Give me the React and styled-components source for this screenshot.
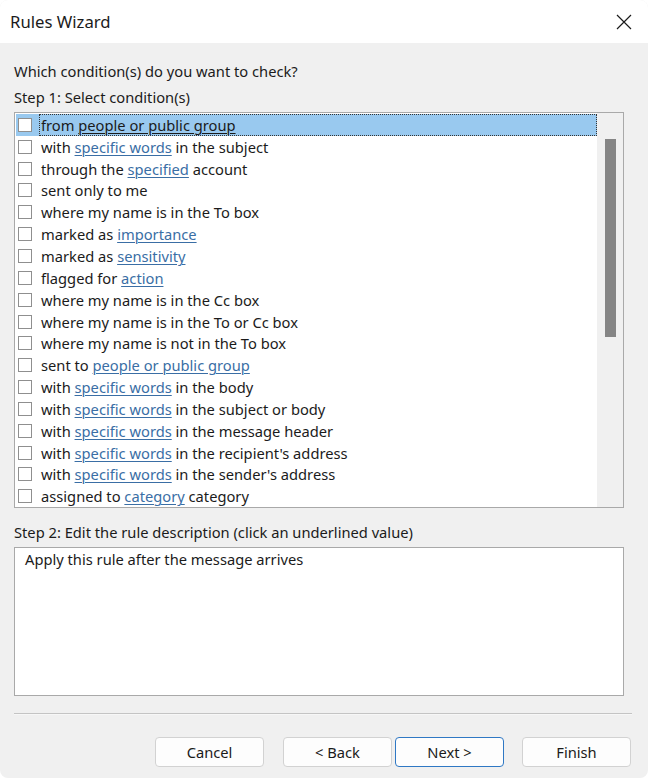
import React from "react";
import styled, { createGlobalStyle } from "styled-components";

const Global = createGlobalStyle`
  html, body { margin: 0; padding: 0; background: #ffffff; }
  body { font-family: "Noto Sans", "Open Sans", sans-serif; color: #1b1b1b; }
  * { box-sizing: border-box; }
`;

const Window = styled.div`
  width: 648px;
  height: 778px;
  border-radius: 8px;
  overflow: hidden;
  display: flex;
  flex-direction: column;
  background: #f0f0f0;
`;

const TitleBar = styled.div`
  height: 43px;
  flex: none;
  background: #ffffff;
  display: flex;
  align-items: center;
  justify-content: space-between;
  padding: 0 15px 0 10px;
`;

const Title = styled.div`
  font-size: 16.7px;
  color: #1b1b1b;
  padding-bottom: 1px;
`;

const CloseButton = styled.div`
  width: 18px;
  height: 18px;
  display: flex;
  align-items: center;
  justify-content: center;
`;

const Body = styled.div`
  flex: 1;
  display: flex;
  flex-direction: column;
  padding: 18px 16px 0 14px;
`;

const Label = styled.div`
  font-size: 14.7px;
  line-height: 20px;
  height: 20px;
  margin-top: ${(p) => p.$mt || 0}px;
  white-space: nowrap;
`;

const ListBox = styled.div`
  margin-top: 5px;
  margin-right: 8px;
  height: 396px;
  border: 1px solid #a9a9a9;
  background: #ffffff;
  display: flex;
`;

const Rows = styled.div`
  flex: 1;
  padding: 1px 0 0 1px;
  display: flex;
  flex-direction: column;
`;

const Row = styled.div`
  height: 21.85px;
  display: flex;
  align-items: center;
  background: ${(p) => (p.$selected ? "#99c9ef" : "transparent")};
  font-size: 14.7px;
  white-space: nowrap;
`;

const Check = styled.span`
  width: 14px;
  height: 14px;
  flex: none;
  margin-left: 2px;
  margin-right: 7px;
  border: 1px solid #8f8f8f;
  background: #ffffff;
`;

const RowText = styled.span`
  flex: 1;
  align-self: stretch;
  display: flex;
  align-items: center;
  padding-left: 1px;
  border: 1px dotted ${(p) => (p.$focus ? "#333" : "transparent")};
`;

const Link = styled.span`
  color: ${(p) => (p.$selected ? "#1b1b1b" : "#3a6ea5")};
  text-decoration: underline;
  text-underline-offset: 2px;
  text-decoration-thickness: 1px;
  white-space: pre;
`;

const Plain = styled.span`
  white-space: pre;
`;

const ScrollTrack = styled.div`
  width: 26px;
  flex: none;
  background: #f0f0f0;
  display: flex;
  justify-content: center;
  padding-top: 26px;
`;

const Thumb = styled.div`
  width: 11px;
  height: 198px;
  background: #858585;
`;

const DescBox = styled.div`
  margin-top: 5px;
  margin-right: 8px;
  height: 149px;
  border: 1px solid #a9a9a9;
  background: #ffffff;
  padding: 1px 10px;
  font-size: 14.7px;
  line-height: 20px;
`;

const Separator = styled.div`
  margin-top: 17px;
  height: 2px;
  border-top: 1px solid #c4c4c4;
  border-bottom: 1px solid #f7f7f7;
`;

const ButtonRow = styled.div`
  margin-top: 22px;
  display: flex;
  justify-content: flex-end;
  padding-right: 1px;
`;

const Button = styled.button`
  width: 109px;
  height: 30px;
  margin-left: ${(p) => p.$ml || 0}px;
  border-radius: 4px;
  border: 1px solid ${(p) => (p.$primary ? "#2f78c4" : "#d2d2d2")};
  background: #fdfdfd;
  font-family: "Noto Sans", "Open Sans", sans-serif;
  font-size: 14.7px;
  color: #1b1b1b;
  padding: 0 0 1px 0;
`;

const rows = [
  ["from ", { l: "people or public group" }],
  ["with ", { l: "specific words" }, " in the subject"],
  ["through the ", { l: "specified" }, " account"],
  ["sent only to me"],
  ["where my name is in the To box"],
  ["marked as ", { l: "importance" }],
  ["marked as ", { l: "sensitivity" }],
  ["flagged for ", { l: "action" }],
  ["where my name is in the Cc box"],
  ["where my name is in the To or Cc box"],
  ["where my name is not in the To box"],
  ["sent to ", { l: "people or public group" }],
  ["with ", { l: "specific words" }, " in the body"],
  ["with ", { l: "specific words" }, " in the subject or body"],
  ["with ", { l: "specific words" }, " in the message header"],
  ["with ", { l: "specific words" }, " in the recipient's address"],
  ["with ", { l: "specific words" }, " in the sender's address"],
  ["assigned to ", { l: "category" }, " category"],
];

export default function App() {
  return (
    <>
      <Global />
      <Window>
        <TitleBar>
          <Title>Rules Wizard</Title>
          <CloseButton>
            <svg width="16" height="16" viewBox="0 0 16 16">
              <path d="M1 1 L15 15 M15 1 L1 15" stroke="#1b1b1b" strokeWidth="1.2" fill="none" />
            </svg>
          </CloseButton>
        </TitleBar>
        <Body>
          <Label>Which condition(s) do you want to check?</Label>
          <Label $mt={6}>Step 1: Select condition(s)</Label>
          <ListBox>
            <Rows>
              {rows.map((parts, i) => (
                <Row key={i} $selected={i === 0}>
                  <Check />
                  <RowText $focus={i === 0}>
                    {parts.map((p, j) =>
                      typeof p === "string" ? (
                        <Plain key={j}>{p}</Plain>
                      ) : (
                        <Link key={j} $selected={i === 0}>
                          {p.l}
                        </Link>
                      )
                    )}
                  </RowText>
                </Row>
              ))}
            </Rows>
            <ScrollTrack>
              <Thumb />
            </ScrollTrack>
          </ListBox>
          <Label $mt={14}>Step 2: Edit the rule description (click an underlined value)</Label>
          <DescBox>Apply this rule after the message arrives</DescBox>
          <Separator />
          <ButtonRow>
            <Button>Cancel</Button>
            <Button $ml={19}>&lt; Back</Button>
            <Button $ml={3} $primary>
              Next &gt;
            </Button>
            <Button $ml={18}>Finish</Button>
          </ButtonRow>
        </Body>
      </Window>
    </>
  );
}
